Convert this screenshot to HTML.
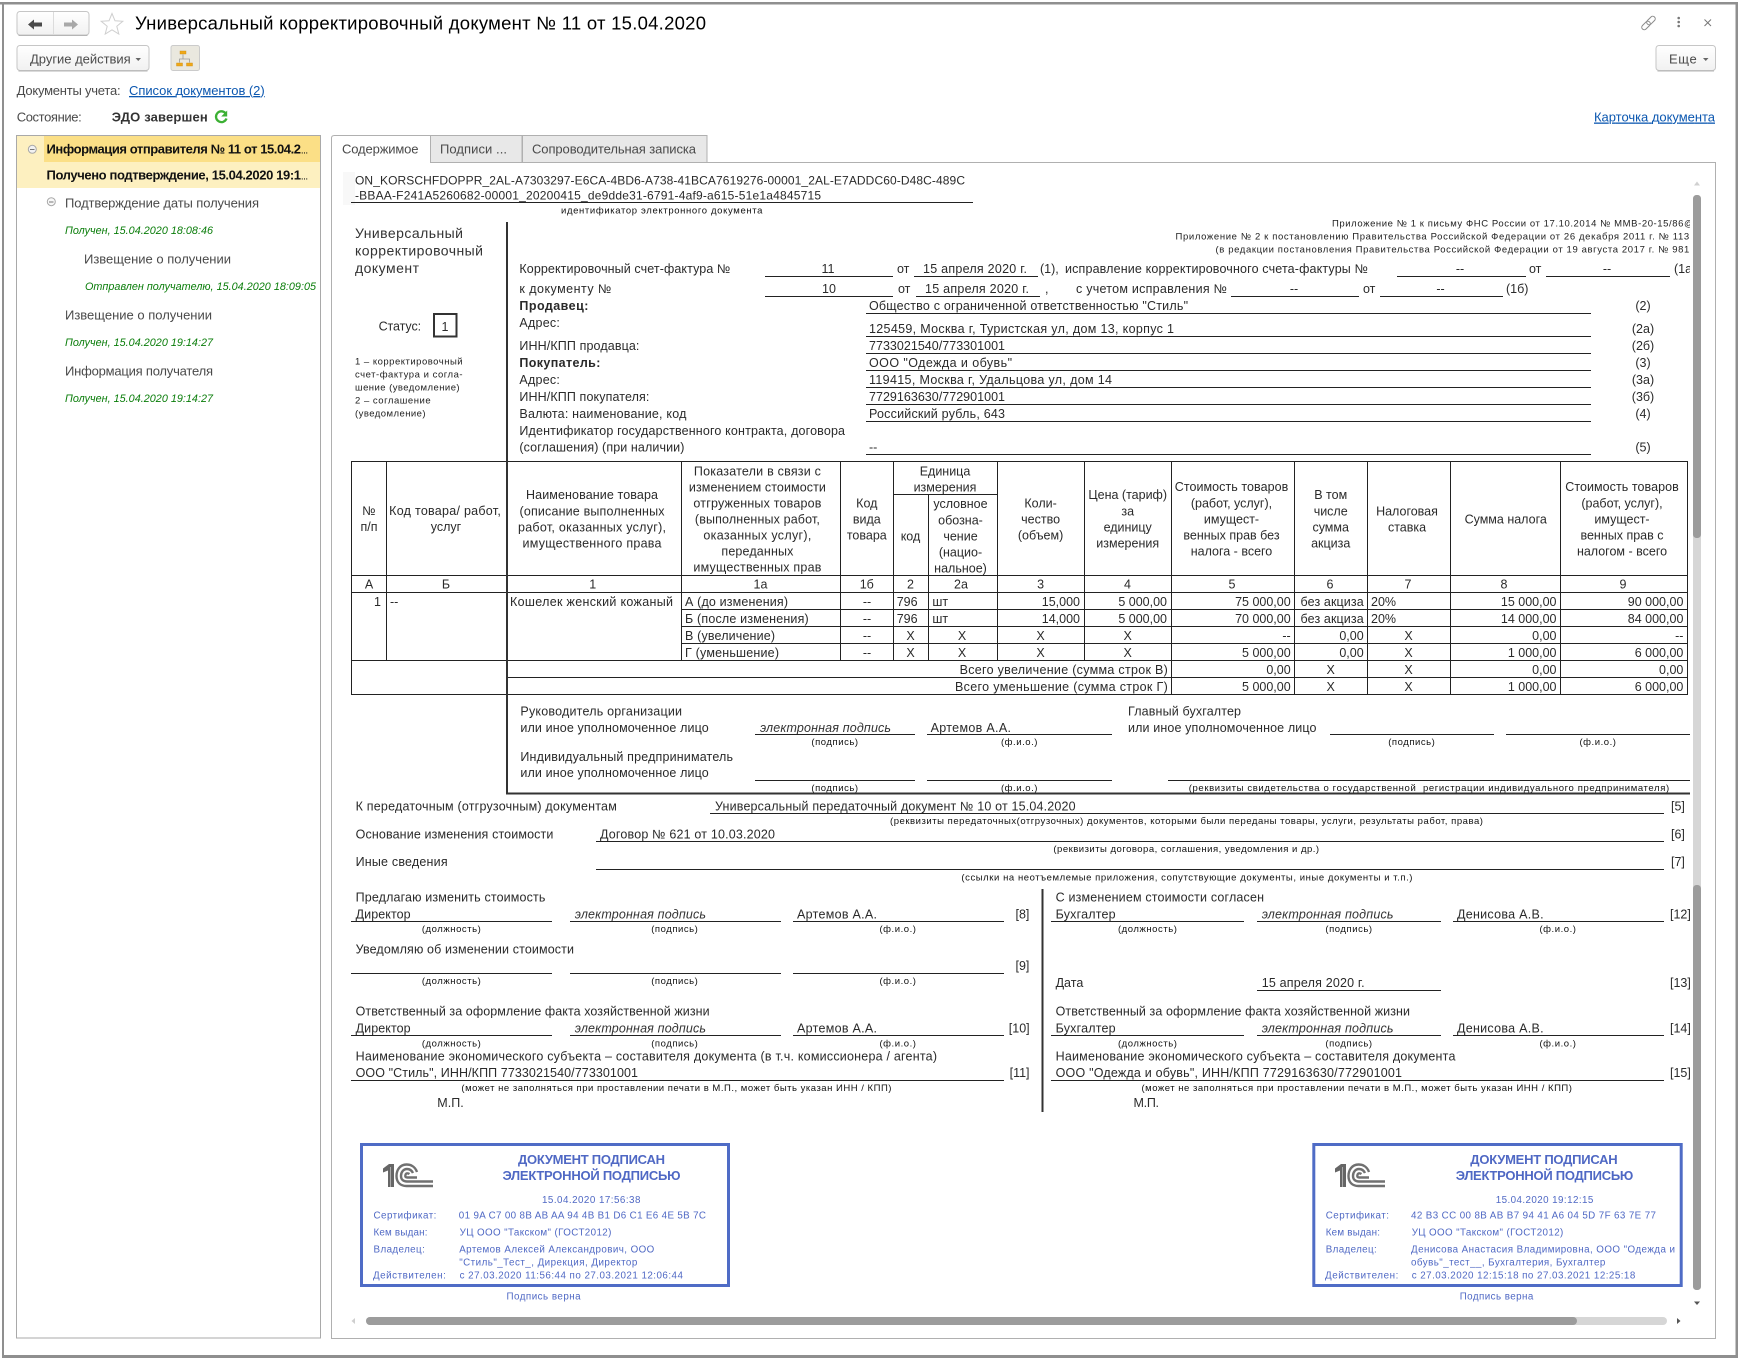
<!DOCTYPE html>
<html lang="ru"><head><meta charset="utf-8"><title>Универсальный корректировочный документ</title>
<style>
html,body{margin:0;padding:0;background:#fff}
svg{display:block;position:absolute;left:0;top:0}
text{font-family:"Liberation Sans",Arial,sans-serif;font-size:12.5px;fill:#2a2a2a;white-space:pre}
.t{font-size:13px;fill:#4a4a4a}
.b{font-weight:bold}
.g{font-size:10.8px;font-style:italic;fill:#0a7d0a}
.s{font-size:9.5px;letter-spacing:.55px;fill:#111}
.k{font-size:9.5px;letter-spacing:.4px;fill:#222}
.i{font-style:italic;fill:#333}
.mid{text-anchor:middle}
.end{text-anchor:end}
.l{fill:#0b57b0;text-decoration:underline;font-size:13px}
.st{font-size:9.8px;fill:#4f68c4}
.sh{font-size:13px;font-weight:bold;fill:#4f68c4}
</style></head><body>
<svg width="1738" height="1358" viewBox="0 0 1738 1358" xmlns="http://www.w3.org/2000/svg">
<defs>
<linearGradient id="btn" x1="0" y1="0" x2="0" y2="1"><stop offset="0" stop-color="#ffffff"/><stop offset="1" stop-color="#f1f1f1"/></linearGradient>
<g id="logo">
<path d="M0 5.5 L6 1 H11 V24 H5 V7.5 L0 9.5Z" fill="#666"/>
<path d="M7.5 4V24" stroke="#aaa" stroke-width="1" fill="none"/>
<g fill="none" stroke="#707070" stroke-width="2.4">
<path d="M34 9 C32 3 27 1.5 23.5 1.5 C17 1.5 13.5 7 13.5 13 C13.5 19.5 17.5 23 23.5 23 H50"/>
<path d="M30 10 C28.5 7 26 6 24 6 C20.5 6 18 9 18 13 C18 16.5 20.5 18.5 24 18.5 H50"/>
<path d="M26.5 11 C25.5 10.3 25 10.3 24 10.3 C23 10.3 22.3 11.5 22.3 13 C22.3 14 23 14.5 24.5 14.5 H34"/>
</g>
</g>
</defs>

<!-- window frame -->
<rect x="0" y="2" width="1738" height="2.5" fill="#8f8f8f"/>
<rect x="2" y="2" width="2" height="1356" fill="#8f8f8f"/>
<rect x="1735.5" y="2" width="2.5" height="1356" fill="#8f8f8f"/>
<rect x="2" y="1355" width="1736" height="3" fill="#8f8f8f"/>

<!-- header -->
<rect x="17" y="11.5" width="72" height="23.5" rx="3" fill="url(#btn)" stroke="#c6c6c6"/>
<path d="M18.5 35.5H87.5" stroke="#b4b4b4"/>
<path d="M53.5 12V35" stroke="#dcdcdc"/>
<path d="M28 24.5l6-5v3h8v4h-8v3z" fill="#4a4a4a"/>
<path d="M78 24.5l-6-5v3h-8v4h8v3z" fill="#a8a8a8"/>
<path d="M112 13.5l3 7.3 7.8.5-6 5 2 7.7-6.800-4.200-6.800 4.200 2-7.700-6-5 7.800-.5z" fill="#fff" stroke="#cfcfcf"/>
<text x="135" y="29.5" style="font-size:18.5px;fill:#000" textLength="571">Универсальный корректировочный документ № 11 от 15.04.2020</text>

<g transform="rotate(-45 1648.5 23)" fill="none" stroke="#8a8a8a" stroke-width="1">
<rect x="1640" y="20.5" width="10" height="5" rx="2.500"/>
<rect x="1647" y="20.5" width="10" height="5" rx="2.500"/>
</g>
<circle cx="1678.7" cy="18" r="1.3" fill="#777"/><circle cx="1678.7" cy="22" r="1.3" fill="#777"/><circle cx="1678.7" cy="26" r="1.3" fill="#777"/>
<path d="M1704.5 19.5l6.500 6.500M1711 19.5l-6.500 6.500" stroke="#777" fill="none"/>

<rect x="17" y="45.5" width="132" height="25" rx="3" fill="url(#btn)" stroke="#c6c6c6"/>
<path d="M18.5 71H147.500" stroke="#b4b4b4"/>
<text x="30" y="63.5" class="t" textLength="100.7">Другие действия</text>
<path d="M135.5 58h5.500l-2.750 3z" fill="#666"/>

<rect x="171" y="45.5" width="28.5" height="25" rx="2" fill="#eae8df" stroke="#cbcbcb"/>
<path d="M183 54.5V59M179.500 62.500V59H189.500V62.500" stroke="#999" fill="none" stroke-width=".8"/>
<g fill="#f0a818" stroke="#c98a10" stroke-width=".4">
<rect x="180" y="51" width="6" height="3"/>
<rect x="176.5" y="63" width="6" height="3"/><rect x="186.5" y="63" width="6" height="3"/>
</g>

<rect x="1656" y="45.5" width="59.5" height="25" rx="3" fill="url(#btn)" stroke="#c6c6c6"/>
<path d="M1657.5 71H1714" stroke="#b4b4b4"/>
<text x="1669" y="63.5" class="t" textLength="27.7">Еще</text>
<path d="M1703 58h5.500l-2.750 3z" fill="#666"/>

<text x="16.6" y="95" class="t" textLength="104">Документы учета:</text>
<text x="129" y="95" class="l" textLength="135.7">Список документов (2)</text>
<text x="16.7" y="121.5" class="t" textLength="65">Состояние:</text>
<text x="111.7" y="121.5" class="t b" style="fill:#333" textLength="96">ЭДО завершен</text>
<path d="M225.5 113.2A5.400 5.400 0 1 0 226.5 118.500" fill="none" stroke="#3cb034" stroke-width="2.3"/>
<path d="M227.2 110.5v6h-6z" fill="#3cb034"/>
<text x="1594" y="121.5" class="l" textLength="121">Карточка документа</text>

<!-- left tree -->
<rect x="17" y="136" width="303" height="52" fill="#fdf0c0"/>
<rect x="44" y="136" width="276" height="26" fill="#fbdf86"/>
<rect x="16.5" y="135.5" width="304" height="1202.5" fill="none" stroke="#a9a9a9"/>
<circle cx="32.3" cy="149.3" r="4" fill="#f2f2f2" stroke="#a8a8a8"/><path d="M30 149.5h4.500" stroke="#777"/>
<circle cx="51.3" cy="201.7" r="4" fill="#f8f8f8" stroke="#a8a8a8"/><path d="M49 202h4.500" stroke="#777"/>
<text x="46.5" y="153.5" class="t b" style="fill:#111" textLength="254.500">Информация отправителя № 11 от 15.04.2</text>
<text x="301" y="153.5" class="b" style="font-size:7px;fill:#111">…</text>
<text x="46.5" y="179.5" class="t b" style="fill:#111" textLength="254.500">Получено подтверждение, 15.04.2020 19:1</text>
<text x="301" y="179.5" class="b" style="font-size:7px;fill:#111">…</text>
<text x="65" y="207.5" class="t" textLength="194">Подтверждение даты получения</text>
<text x="65" y="234" class="g" textLength="148">Получен, 15.04.2020 18:08:46</text>
<text x="84" y="263.5" class="t" textLength="147">Извещение о получении</text>
<text x="85" y="290" class="g" textLength="231">Отправлен получателю, 15.04.2020 18:09:05</text>
<text x="65" y="319.5" class="t" textLength="147">Извещение о получении</text>
<text x="65" y="346" class="g" textLength="148">Получен, 15.04.2020 19:14:27</text>
<text x="65" y="375.5" class="t" textLength="148">Информация получателя</text>
<text x="65" y="402" class="g" textLength="148">Получен, 15.04.2020 19:14:27</text>

<!-- tabs and panel -->
<rect x="430.5" y="135.5" width="91.5" height="27" fill="#e8e8e8" stroke="#b0b0b0"/>
<rect x="522.5" y="135.5" width="184.5" height="27" fill="#e8e8e8" stroke="#b0b0b0"/>
<path d="M331.5 1338V138q0-2.500 3-2.500H430.500V162.500H1715.500V1338.500H331.500Z" fill="#fff" stroke="#b0b0b0"/>
<text x="342" y="153.5" class="t" textLength="76.5">Содержимое</text>
<text x="440" y="153.5" class="t" textLength="67">Подписи ...</text>
<text x="532" y="153.5" class="t" textLength="164">Сопроводительная записка</text>

<!-- doc head -->
<rect x="343" y="172" width="12" height="33" fill="#f8f8f8"/>
<text x="355" y="184.5" textLength="610" style="font-size:12px">ON_KORSCHFDOPPR_2AL-A7303297-E6CA-4BD6-A738-41BCA7619276-00001_2AL-E7ADDC60-D48C-489C</text>
<text x="355" y="199.5" textLength="466" style="font-size:12px">-BBAA-F241A5260682-00001_20200415_de9dde31-6791-4af9-a615-51e1a4845715</text>
<text x="561" y="213.5" class="s" textLength="202">идентификатор электронного документа</text>

<text x="355" y="238" style="font-size:14px;fill:#333" textLength="108">Универсальный</text>
<text x="355" y="255.5" style="font-size:14px;fill:#333" textLength="128">корректировочный</text>
<text x="355" y="273" style="font-size:14px;fill:#333" textLength="64">документ</text>
<text x="378.6" y="330.5" textLength="42.5">Статус:</text>
<rect x="434" y="314" width="22.5" height="22.5" fill="none" stroke="#333" stroke-width="2"/>
<text x="445" y="331" class="mid">1</text>
<text x="355" y="364.5" class="k" textLength="108">1 – корректировочный</text>
<text x="355" y="377.5" class="k" textLength="108">счет-фактура и согла-</text>
<text x="355" y="390.5" class="k" textLength="105">шение (уведомление)</text>
<text x="355" y="403.5" class="k" textLength="76">2 – соглашение</text>
<text x="355" y="416.5" class="k" textLength="71">(уведомление)</text>

<text x="1332" y="226.5" class="k" textLength="362">Приложение № 1 к письму ФНС России от 17.10.2014 № ММВ-20-15/86@</text>
<text x="1175.5" y="239.5" class="k" textLength="520">Приложение № 2 к постановлению Правительства Российской Федерации от 26 декабря 2011 г. № 1137</text>
<text x="1215.5" y="252.5" class="k" textLength="478">(в редакции постановления Правительства Российской Федерации от 19 августа 2017 г. № 981)</text>

<text x="519.4" y="273" textLength="211">Корректировочный счет-фактура №</text>
<text x="828" y="273" class="mid">11</text>
<text x="897" y="273">от</text>
<text x="923" y="273" textLength="104">15 апреля 2020 г.</text>
<text x="1040" y="273">(1),</text>
<text x="1065" y="273" textLength="303">исправление корректировочного счета-фактуры №</text>
<text x="1460" y="273" class="mid">--</text>
<text x="1529" y="273">от</text>
<text x="1607" y="273" class="mid">--</text>
<text x="1674" y="273">(1а)</text>

<text x="519.4" y="293" textLength="92">к документу №</text>
<text x="829" y="293" class="mid">10</text>
<text x="898" y="293">от</text>
<text x="925" y="293" textLength="104">15 апреля 2020 г.</text>
<text x="1045" y="293">,</text>
<text x="1076" y="293" textLength="151">с учетом исправления №</text>
<text x="1294" y="293" class="mid">--</text>
<text x="1363" y="293">от</text>
<text x="1440.5" y="293" class="mid">--</text>
<text x="1506" y="293">(1б)</text>

<text x="519.4" y="310" class="b" textLength="69">Продавец:</text>
<text x="519.4" y="327" textLength="40.5">Адрес:</text>
<text x="519.4" y="350" textLength="120">ИНН/КПП продавца:</text>
<text x="519.4" y="367" class="b" textLength="81">Покупатель:</text>
<text x="519.4" y="384" textLength="40.5">Адрес:</text>
<text x="519.4" y="401" textLength="130">ИНН/КПП покупателя:</text>
<text x="519.4" y="418" textLength="167">Валюта: наименование, код</text>
<text x="519.4" y="435" textLength="325.6">Идентификатор государственного контракта, договора</text>
<text x="519.4" y="451.5" textLength="165">(соглашения) (при наличии)</text>

<text x="869" y="310" textLength="319">Общество с ограниченной ответственностью "Стиль"</text>
<text x="869" y="333" textLength="305">125459, Москва г, Туристская ул, дом 13, корпус 1</text>
<text x="869" y="350" textLength="136">7733021540/773301001</text>
<text x="869" y="367" textLength="143">ООО "Одежда и обувь"</text>
<text x="869" y="384" textLength="243">119415, Москва г, Удальцова ул, дом 14</text>
<text x="869" y="401" textLength="136">7729163630/772901001</text>
<text x="869" y="418" textLength="136">Российский рубль, 643</text>
<text x="869" y="451.5">--</text>
<g class="mid" text-anchor="middle">
<text x="1643" y="310">(2)</text><text x="1643" y="333">(2а)</text><text x="1643" y="350">(2б)</text><text x="1643" y="367">(3)</text><text x="1643" y="384">(3а)</text><text x="1643" y="401">(3б)</text><text x="1643" y="418">(4)</text><text x="1643" y="451.5">(5)</text>
</g>

<!-- table header -->
<g text-anchor="middle">
<text x="369" y="515">№</text><text x="369" y="531">п/п</text>
<text x="445" y="515" textLength="111.7">Код товара/ работ,</text><text x="446" y="531">услуг</text>
<text x="592" y="499" textLength="132">Наименование товара</text><text x="592" y="515.5" textLength="145">(описание выполненных</text><text x="592" y="531.5" textLength="148">работ, оказанных услуг),</text><text x="592" y="547.5" textLength="139">имущественного права</text>
<text x="757.4" y="475.5" textLength="127">Показатели в связи с</text><text x="757.4" y="491.5" textLength="137">изменением стоимости</text><text x="757.4" y="507.5" textLength="128">отгруженных товаров</text><text x="757.4" y="523.5" textLength="125">(выполненных работ,</text><text x="757.4" y="539.5" textLength="108">оказанных услуг),</text><text x="757.4" y="555.5" textLength="72">переданных</text><text x="757.4" y="571.5" textLength="128">имущественных прав</text>
<text x="866.8" y="507.5">Код</text><text x="866.8" y="523.5">вида</text><text x="866.8" y="539.5">товара</text>
<text x="945" y="475.5">Единица</text><text x="945" y="491.5">измерения</text>
<text x="910.5" y="540.5">код</text>
<text x="960.5" y="508">условное</text><text x="960.5" y="524.5">обозна-</text><text x="960.5" y="540.5">чение</text><text x="960.5" y="556.5">(нацио-</text><text x="960.5" y="572.5">нальное)</text>
<text x="1040.6" y="507.5">Коли-</text><text x="1040.6" y="523.5">чество</text><text x="1040.6" y="539.5">(объем)</text>
<text x="1127.7" y="499">Цена (тариф)</text><text x="1127.7" y="515.5">за</text><text x="1127.7" y="531.5">единицу</text><text x="1127.7" y="547.5">измерения</text>
<text x="1231.5" y="491" textLength="113.5">Стоимость товаров</text><text x="1231.5" y="507.5">(работ, услуг),</text><text x="1231.5" y="523.5">имущест-</text><text x="1231.5" y="539.5">венных прав без</text><text x="1231.5" y="555.5">налога - всего</text>
<text x="1330.7" y="499">В том</text><text x="1330.7" y="515.5">числе</text><text x="1330.7" y="531.5">сумма</text><text x="1330.7" y="547.5">акциза</text>
<text x="1407" y="515.5">Налоговая</text><text x="1407" y="531.5">ставка</text>
<text x="1505.7" y="523.5">Сумма налога</text>
<text x="1622" y="491" textLength="113.5">Стоимость товаров</text><text x="1622" y="507.5">(работ, услуг),</text><text x="1622" y="523.5">имущест-</text><text x="1622" y="539.5">венных прав с</text><text x="1622" y="555.5">налогом - всего</text>
<!-- index row -->
<text x="369" y="588.5">А</text><text x="446" y="588.5">Б</text><text x="592.7" y="588.5">1</text><text x="760.5" y="588.5">1а</text><text x="866.8" y="588.5">1б</text><text x="910.5" y="588.5">2</text><text x="961" y="588.5">2а</text><text x="1040.6" y="588.5">3</text><text x="1127.5" y="588.5">4</text><text x="1232" y="588.5">5</text><text x="1330" y="588.5">6</text><text x="1408" y="588.5">7</text><text x="1504" y="588.5">8</text><text x="1623" y="588.5">9</text>
<!-- center cells -->
<text x="867" y="606">--</text><text x="867" y="623">--</text><text x="867" y="640">--</text><text x="867" y="657">--</text>
<text x="910.5" y="640">X</text><text x="962" y="640">X</text><text x="1040.6" y="640">X</text><text x="1127.7" y="640">X</text><text x="1408.6" y="640">X</text>
<text x="910.5" y="657">X</text><text x="962" y="657">X</text><text x="1040.6" y="657">X</text><text x="1127.7" y="657">X</text><text x="1408.6" y="657">X</text>
<text x="1330.7" y="674">X</text><text x="1408.6" y="674">X</text><text x="1330.7" y="691">X</text><text x="1408.6" y="691">X</text>
</g>
<text x="381" y="606" class="end">1</text>
<text x="390" y="606">--</text>
<text x="510" y="606" textLength="163">Кошелек женский кожаный</text>
<text x="685" y="606" textLength="103">А (до изменения)</text>
<text x="685" y="623" textLength="123.7">Б (после изменения)</text>
<text x="685" y="640" textLength="90">В (увеличение)</text>
<text x="685" y="657" textLength="94">Г (уменьшение)</text>
<text x="896.7" y="606">796</text><text x="896.7" y="623">796</text>
<text x="932.4" y="606">шт</text><text x="932.4" y="623">шт</text>
<text x="1300.5" y="606" textLength="63.2">без акциза</text><text x="1300.5" y="623" textLength="63.2">без акциза</text>
<text x="1371" y="606">20%</text><text x="1371" y="623">20%</text>
<g text-anchor="end">
<text x="1080" y="606">15,000</text><text x="1080" y="623">14,000</text>
<text x="1167" y="606">5 000,00</text><text x="1167" y="623">5 000,00</text>
<text x="1290.7" y="606">75 000,00</text><text x="1290.7" y="623">70 000,00</text><text x="1290.7" y="640">--</text><text x="1290.7" y="657">5 000,00</text><text x="1290.7" y="674">0,00</text><text x="1290.7" y="691">5 000,00</text>
<text x="1363.7" y="640">0,00</text><text x="1363.7" y="657">0,00</text>
<text x="1556.5" y="606">15 000,00</text><text x="1556.5" y="623">14 000,00</text><text x="1556.5" y="640">0,00</text><text x="1556.5" y="657">1 000,00</text><text x="1556.5" y="674">0,00</text><text x="1556.5" y="691">1 000,00</text>
<text x="1683.4" y="606">90 000,00</text><text x="1683.4" y="623">84 000,00</text><text x="1683.4" y="640">--</text><text x="1683.4" y="657">6 000,00</text><text x="1683.4" y="674">0,00</text><text x="1683.4" y="691">6 000,00</text>
</g>
<text x="959.6" y="674" textLength="208.2">Всего увеличение (сумма строк В)</text>
<text x="955" y="691" textLength="212.8">Всего уменьшение (сумма строк Г)</text>

<!-- signatures in block -->
<text x="520.4" y="715.5" textLength="161.6">Руководитель организации</text>
<text x="520.4" y="732" textLength="188.3">или иное уполномоченное лицо</text>
<text x="760" y="732" class="i" textLength="131">электронная подпись</text>
<text x="930.6" y="732" textLength="80.4">Артемов А.А.</text>
<text x="835" y="745" class="s mid">(подпись)</text>
<text x="1019.5" y="745" class="s mid">(ф.и.о.)</text>
<text x="1128" y="715.5" textLength="113">Главный бухгалтер</text>
<text x="1128" y="732" textLength="188.5">или иное уполномоченное лицо</text>
<text x="1411.8" y="745" class="s mid">(подпись)</text>
<text x="1598" y="745" class="s mid">(ф.и.о.)</text>
<text x="520.4" y="761" textLength="212.6">Индивидуальный предприниматель</text>
<text x="520.4" y="777" textLength="188.3">или иное уполномоченное лицо</text>
<text x="835" y="791" class="s mid">(подпись)</text>
<text x="1019.5" y="791" class="s mid">(ф.и.о.)</text>
<text x="1188.7" y="791" class="s" textLength="481">(реквизиты свидетельства о государственной  регистрации индивидуального предпринимателя)</text>

<!-- lower block -->
<text x="355.6" y="810.5" textLength="261.2">К передаточным (отгрузочным) документам</text>
<text x="715" y="810.5" textLength="360.6">Универсальный передаточный документ № 10 от 15.04.2020</text>
<text x="1671" y="810.5">[5]</text>
<text x="890" y="824" class="s" textLength="593.5">(реквизиты передаточных(отгрузочных) документов, которыми были переданы товары, услуги, результаты работ, права)</text>
<text x="355.6" y="838.5" textLength="197.8">Основание изменения стоимости</text>
<text x="600" y="838.5" textLength="175">Договор № 621 от 10.03.2020</text>
<text x="1671" y="838.5">[6]</text>
<text x="1053.4" y="852" class="s" textLength="266.2">(реквизиты договора, соглашения, уведомления и др.)</text>
<text x="355.6" y="866" textLength="92">Иные сведения</text>
<text x="1671" y="866">[7]</text>
<text x="961.4" y="880.5" class="s" textLength="451.6">(ссылки на неотъемлемые приложения, сопутствующие документы, иные документы и т.п.)</text>

<text x="355.6" y="901.5" textLength="189.8">Предлагаю изменить стоимость</text>
<text x="355.6" y="918.5" textLength="55">Директор</text>
<text x="574.8" y="918.5" class="i" textLength="131.2">электронная подпись</text>
<text x="797" y="918.5" textLength="80">Артемов А.А.</text>
<text x="1015.5" y="918.5">[8]</text>
<text x="451.6" y="932" class="s mid">(должность)</text><text x="674.8" y="932" class="s mid">(подпись)</text><text x="898" y="932" class="s mid">(ф.и.о.)</text>
<text x="355.6" y="953.5" textLength="218.4">Уведомляю об изменении стоимости</text>
<text x="1015.5" y="970">[9]</text>
<text x="451.6" y="984" class="s mid">(должность)</text><text x="674.8" y="984" class="s mid">(подпись)</text><text x="898" y="984" class="s mid">(ф.и.о.)</text>
<text x="355.6" y="1015.5" textLength="354">Ответственный за оформление факта хозяйственной жизни</text>
<text x="355.6" y="1032.5" textLength="55">Директор</text>
<text x="574.8" y="1032.5" class="i" textLength="131.2">электронная подпись</text>
<text x="797" y="1032.5" textLength="80">Артемов А.А.</text>
<text x="1008.8" y="1032.5">[10]</text>
<text x="451.6" y="1046.5" class="s mid">(должность)</text><text x="674.8" y="1046.5" class="s mid">(подпись)</text><text x="898" y="1046.5" class="s mid">(ф.и.о.)</text>
<text x="355.6" y="1060.5" textLength="581.4">Наименование экономического субъекта – составителя документа (в т.ч. комиссионера / агента)</text>
<text x="355.6" y="1077" textLength="282.4">ООО "Стиль", ИНН/КПП 7733021540/773301001</text>
<text x="1009.6" y="1077">[11]</text>
<text x="461.4" y="1091" class="s" textLength="430.6">(может не заполняться при проставлении печати в М.П., может быть указан ИНН / КПП)</text>
<text x="437.3" y="1107" textLength="26.4">М.П.</text>

<text x="1055.6" y="901.5" textLength="208.4">С изменением стоимости согласен</text>
<text x="1055.6" y="918.5" textLength="60">Бухгалтер</text>
<text x="1261.7" y="918.5" class="i" textLength="131.8">электронная подпись</text>
<text x="1457" y="918.5" textLength="86.6">Денисова А.В.</text>
<text x="1670" y="918.5">[12]</text>
<text x="1147.7" y="932" class="s mid">(должность)</text><text x="1349" y="932" class="s mid">(подпись)</text><text x="1558" y="932" class="s mid">(ф.и.о.)</text>
<text x="1055.6" y="987">Дата</text>
<text x="1261.7" y="987" textLength="102.9">15 апреля 2020 г.</text>
<text x="1670" y="987">[13]</text>
<text x="1055.6" y="1015.5" textLength="354.4">Ответственный за оформление факта хозяйственной жизни</text>
<text x="1055.6" y="1032.5" textLength="60">Бухгалтер</text>
<text x="1261.7" y="1032.5" class="i" textLength="131.8">электронная подпись</text>
<text x="1457" y="1032.5" textLength="86.6">Денисова А.В.</text>
<text x="1670" y="1032.5">[14]</text>
<text x="1147.7" y="1046.5" class="s mid">(должность)</text><text x="1349" y="1046.5" class="s mid">(подпись)</text><text x="1558" y="1046.5" class="s mid">(ф.и.о.)</text>
<text x="1055.6" y="1060.5" textLength="399.8">Наименование экономического субъекта – составителя документа</text>
<text x="1055.6" y="1077" textLength="346.4">ООО "Одежда и обувь", ИНН/КПП 7729163630/772901001</text>
<text x="1670" y="1077">[15]</text>
<text x="1141.5" y="1091" class="s" textLength="431">(может не заполняться при проставлении печати в М.П., может быть указан ИНН / КПП)</text>
<text x="1133.5" y="1107" textLength="25.5">М.П.</text>

<!-- thin lines -->
<path fill="none" stroke="#222" stroke-width="1" shape-rendering="crispEdges" d="
M351 202.5H973
M765 276.5H893M914 276.5H1038M1397 276.5H1526M1546 276.5H1670
M765 296.5H893M916 296.5H1040M1231 296.5H1359M1380 296.5H1503
M866 313.5H1591M866 336.5H1591M866 353.5H1591M866 370.5H1591M866 387.5H1591M866 404.5H1591M866 421.5H1591M866 454.5H1591
M351 461.5H1688M893 494.5H997M351 575.5H1688M351 592.5H1688
M681 609.5H1688M681 626.5H1688M681 643.5H1688M351 660.5H1688M507 677.5H1688M351 694.5H1688
M351.5 461V695M386.5 461V660M681.5 461V660M840.5 461V660M893.5 461V660M928.5 494V660M997.5 461V660M1084.5 461V660
M1171.5 461V695M1294.5 461V695M1367.5 461V695M1450.5 461V695M1560.5 461V695M1687.5 461V695
M755 734.5H915M927 734.5H1112M1330 734.5H1494M1506 734.5H1690
M755 780.5H915M927 780.5H1112M1168 780.5H1690
M710 813.5H1664M596 841.5H1664M596 869.5H1664
M351 921.5H552M570 921.5H781M793 921.5H1004
M351 973.5H552M570 973.5H781M793 973.5H1004
M351 1035.5H552M570 1035.5H781M793 1035.5H1004
M351 1080.5H1004
M1051 921.5H1244M1257 921.5H1441M1453 921.5H1664
M1257 990.5H1441
M1051 1035.5H1244M1257 1035.5H1441M1453 1035.5H1664
M1051 1080.5H1664"/>
<path fill="none" stroke="#333" stroke-width="2" shape-rendering="crispEdges" d="M507 222V794M506 793.5H1690M1042.5 889V1112"/>

<!-- stamps -->
<rect x="361.5" y="1144.5" width="367" height="141" fill="none" stroke="#4f6cc6" stroke-width="3"/>
<use href="#logo" x="383" y="1163"/>
<text x="518" y="1164" class="sh" textLength="147">ДОКУМЕНТ ПОДПИСАН</text>
<text x="502.5" y="1180" class="sh" textLength="178">ЭЛЕКТРОННОЙ ПОДПИСЬЮ</text>
<text x="542" y="1203" class="st" textLength="98.4">15.04.2020 17:56:38</text>
<text x="373.5" y="1218.5" class="st" textLength="62.9">Сертификат:</text>
<text x="458.8" y="1218.5" class="st" textLength="247.2">01 9A C7 00 8B AB AA 94 4B B1 D6 C1 E6 4E 5B 7C</text>
<text x="373.5" y="1235.5" class="st" textLength="54">Кем выдан:</text>
<text x="459.6" y="1235.5" class="st" textLength="151.8">УЦ ООО "Такском" (ГОСТ2012)</text>
<text x="373.5" y="1252.5" class="st" textLength="51.3">Владелец:</text>
<text x="459.2" y="1252.5" class="st" textLength="195.1">Артемов Алексей Александрович, ООО</text>
<text x="459.2" y="1265.5" class="st" textLength="178.1">"Стиль"_Тест_, Дирекция, Директор</text>
<text x="373" y="1278.5" class="st" textLength="72.8">Действителен:</text>
<text x="459.6" y="1278.5" class="st" textLength="223.3">с 27.03.2020 11:56:44 по 27.03.2021 12:06:44</text>
<text x="506.5" y="1299.5" class="st" textLength="74.1">Подпись верна</text>

<rect x="1313.8" y="1144.5" width="367.4" height="141" fill="none" stroke="#4f6cc6" stroke-width="3"/>
<use href="#logo" x="1335" y="1163"/>
<text x="1470.3" y="1164" class="sh" textLength="147.4">ДОКУМЕНТ ПОДПИСАН</text>
<text x="1455.7" y="1180" class="sh" textLength="177.6">ЭЛЕКТРОННОЙ ПОДПИСЬЮ</text>
<text x="1495.7" y="1203" class="st" textLength="97.6">15.04.2020 19:12:15</text>
<text x="1325.7" y="1218.5" class="st" textLength="63.3">Сертификат:</text>
<text x="1411" y="1218.5" class="st" textLength="245">42 B3 CC 00 8B AB B7 94 41 A6 04 5D 7F 63 7E 77</text>
<text x="1325.7" y="1235.5" class="st" textLength="54.3">Кем выдан:</text>
<text x="1411.7" y="1235.5" class="st" textLength="151.6">УЦ ООО "Такском" (ГОСТ2012)</text>
<text x="1325.7" y="1252.5" class="st" textLength="51">Владелец:</text>
<text x="1411" y="1252.5" class="st" textLength="264">Денисова Анастасия Владимировна, ООО "Одежда и</text>
<text x="1411" y="1265.5" class="st" textLength="194.3">обувь"_тест__, Бухгалтерия, Бухгалтер</text>
<text x="1325" y="1278.5" class="st" textLength="73.3">Действителен:</text>
<text x="1411.7" y="1278.5" class="st" textLength="223.6">с 27.03.2020 12:15:18 по 27.03.2021 12:25:18</text>
<text x="1459.7" y="1299.5" class="st" textLength="73.6">Подпись верна</text>

<!-- clipping cover + scrollbars -->
<rect x="1690" y="214" width="3.5" height="68" fill="#fff"/>
<rect x="1693" y="195" width="8" height="1095" rx="3.5" fill="#d6d6d6"/>
<rect x="1693" y="195" width="8" height="343" rx="3.5" fill="#9c9c9c"/>
<rect x="1693" y="885" width="8" height="405" rx="3.5" fill="#9c9c9c"/>
<path d="M1694 185.5l3-4 3 4z" fill="#d0d0d0"/>
<path d="M1694 1301.5h6l-3 3.500z" fill="#555"/>
<rect x="366" y="1317" width="1301" height="8" rx="4" fill="#d6d6d6"/>
<rect x="366" y="1317" width="1211" height="8" rx="4" fill="#9c9c9c"/>
<path d="M355 1318l-3.500 3 3.500 3z" fill="#cfcfcf"/>
<path d="M1677 1318l3.500 3-3.500 3z" fill="#555"/>
</svg>
</body></html>
